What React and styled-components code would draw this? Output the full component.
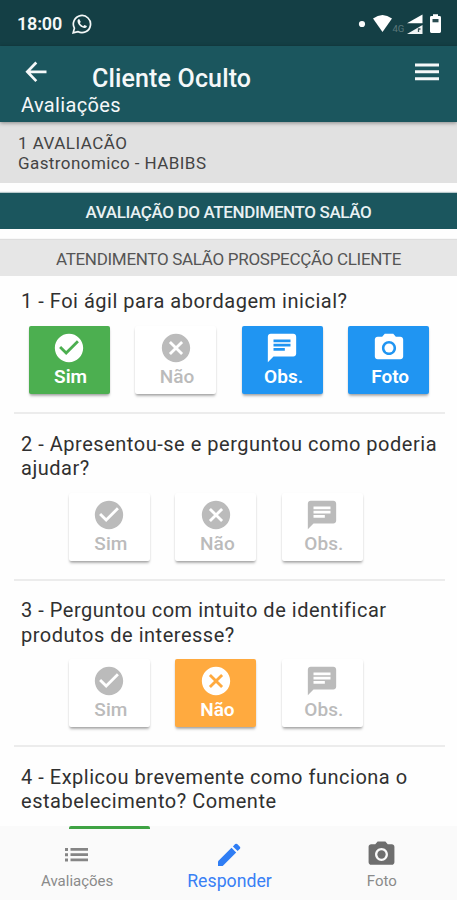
import React from "react";
import styled, { createGlobalStyle } from "styled-components";
import { MdCheckCircle, MdCancel, MdChat, MdCameraAlt } from "react-icons/md";

const GlobalStyle = createGlobalStyle`
  * { box-sizing: border-box; }
  body { margin: 0; background: #fff; font-family: Roboto, "Liberation Sans", sans-serif; }
`;

const Screen = styled.div`
  width: 457px;
  height: 900px;
  overflow: hidden;
  display: flex;
  flex-direction: column;
  background: #fefefe;
`;

const StatusBar = styled.div`
  height: 46px;
  flex: none;
  display: flex;
  align-items: center;
  justify-content: space-between;
  padding: 1px 14px 0 17px;
  background: #143f45;
  color: #f4f8f8;
`;

const StatusGroup = styled.div`
  display: flex;
  align-items: center;
`;

const Clock = styled.span`
  font-size: 18px;
  font-weight: 600;
  letter-spacing: -0.2px;
  margin-right: 10px;
`;

const Header = styled.header`
  height: 76px;
  flex: none;
  padding: 10px 18px 0 21px;
  background: #1b565e;
  color: #f5f8f9;
  position: relative;
  z-index: 1;
  box-shadow: 0 1px 4px rgba(0, 0, 0, 0.4);
`;

const TitleRow = styled.div`
  height: 36px;
  display: grid;
  grid-template-columns: 71px 1fr 24px;
  align-items: start;
`;

const Title = styled.h1`
  margin: 8px 0 0;
  font-size: 25px;
  line-height: 30px;
  font-weight: 500;
  letter-spacing: 0.15px;
  white-space: nowrap;
`;

const Subtitle = styled.div`
  font-size: 20px;
  line-height: 26px;
  letter-spacing: 0.35px;
`;

const Summary = styled.section`
  height: 61px;
  flex: none;
  padding: 11px 18px 0;
  background: #e1e1e1;
  color: #444;
  font-size: 17px;
  line-height: 20px;
`;

const SummaryLine = styled.div`
  letter-spacing: ${(p) => p.$track}px;
`;

const SectionBar = styled.div`
  height: 36px;
  flex: none;
  display: flex;
  align-items: center;
  justify-content: center;
  padding-top: 2px;
  white-space: nowrap;
  font-size: 17px;
  margin-top: ${(p) => (p.$primary ? 10 : 11)}px;
  font-weight: ${(p) => (p.$primary ? 500 : 400)};
  letter-spacing: ${(p) => (p.$primary ? -0.37 : -0.3)}px;
  background: ${(p) => (p.$primary ? "#1b565e" : "#e6e6e6")};
  color: ${(p) => (p.$primary ? "#e9f1f3" : "#555")};
  box-shadow: 0 -1px 1px ${(p) => (p.$primary ? "#b9c9cc" : "#ddd")};
`;

const Questions = styled.main`
  height: 553px;
  flex: none;
  padding: 0 12px 0 14px;
  overflow: hidden;
`;

const Question = styled.section`
  height: ${(p) => p.$height}px;
  padding-top: ${(p) => p.$top}px;
  border-bottom: 2px solid #ececec;
`;

const Prompt = styled.div`
  padding-left: 7px;
  font-size: 20px;
  line-height: 24.5px;
  letter-spacing: 0.52px;
  color: #303030;
  white-space: nowrap;
`;

const Actions = styled.div`
  display: flex;
  gap: 25.5px;
  margin-top: 12px;
  padding-left: ${(p) => (p.$full ? 14.6 : 54.9)}px;
`;

const palette = { yes: "#4caf50", no: "#ffaa3f", info: "#2095f2" };

const ActionButton = styled.button`
  width: 81px;
  height: 68px;
  flex: none;
  padding: 5px 0 0;
  border: 0;
  border-radius: 2px;
  display: flex;
  flex-direction: column;
  align-items: center;
  font-family: inherit;
  font-size: 19px;
  line-height: 23px;
  font-weight: ${(p) => (p.$tone ? 600 : 500)};
  letter-spacing: ${(p) => (p.$tone ? 0 : 0.1)}px;
  background: ${(p) => palette[p.$tone] || "#fff"};
  color: ${(p) => (p.$tone ? "#fff" : "#bbb")};
  box-shadow: 0 3px 3px -1px rgba(0, 0, 0, 0.28), 0 1px 2px rgba(0, 0, 0, 0.12);
  svg { display: block; flex: none; }
`;

const ActionLabel = styled.span`
  padding-left: 3px;
`;

const NavBar = styled.nav`
  height: 71px;
  flex: none;
  display: grid;
  grid-template-columns: repeat(3, 1fr);
  background: #fafafa;
`;

const NavItem = styled.div`
  display: flex;
  flex-direction: column;
  align-items: center;
  padding: 10px 0 0 2px;
  font-size: ${(p) => (p.$active ? 17.7 : 15)}px;
  line-height: 22px;
  color: ${(p) => (p.$active ? "#3880f5" : "#8a8a8a")};
`;

const NavIcon = styled.div`
  height: 31px;
  display: flex;
  align-items: center;
  justify-content: center;
  color: ${(p) => (p.$active ? "#2f7df4" : "#6e6e6e")};
`;

const NextQuestion = styled.section`
  padding-top: 17.5px;
`;

const NextActions = styled.div`
  height: 4px;
  margin: 12px -12px 0 -14px;
  padding-left: 69px;
  background: #fafafa;
`;

const NextAnswerEdge = styled.div`
  width: 81px;
  height: 4px;
  border-radius: 2px 2px 0 0;
  background: #3fa344;
`;

const WhatsApp = () => (
  <svg width="20" height="20" viewBox="0 0 20 20" fill="none">
    <path d="M1.2 18.8 2.4 14.2A8.6 8.6 0 1 1 5.8 17.6Z" stroke="currentColor" strokeWidth="1.7" />
    <path d="M7.2 5.1c-.5-.2-1.7.6-1.7 2 0 3.3 4.1 7.2 7.4 7 1.4-.1 2.2-1.3 1.9-2l-2.4-1.2-1.2 1.3c-1.4-.5-2.8-1.8-3.3-3.1l.9-1.2Z" fill="currentColor" />
  </svg>
);

const StatusIcons = () => (
  <svg width="86" height="26" viewBox="0 0 86 26">
    <circle cx="5" cy="13" r="3.1" fill="#f8fafa" />
    <path d="M16 7.5Q25.5.5 35 7.5L25.5 21Z" fill="#fff" />
    <text x="35.5" y="20.5" fontSize="9.5" letterSpacing="-.2" fontFamily="Roboto, sans-serif" fill="#5b777a">4G</text>
    <path d="M50 12.3 65.5 3.5V12.3Z" fill="#fff" />
    <path d="M50 23 65.5 14V23Z" fill="#f1f5f5" />
    <path d="M61.5 21v-3h2" stroke="#38565b" strokeWidth="1.3" fill="none" />
    <path d="M76 5V3.2h5V5h1.6q1.4 0 1.4 1.4v14.2q0 1.4-1.4 1.4h-8.2q-1.4 0-1.4-1.4V6.4Q73 5 74.4 5Z" fill="#fff" />
    <path d="M75.5 8h6v3.3h-6Z" fill="#294b50" />
  </svg>
);

const BackArrow = styled.svg`
  display: block;
  margin: 5px 0 0 4px;
`;

const MenuBars = styled.svg`
  display: block;
  margin-top: 7px;
`;

const ListGlyph = () => (
  <svg width="24" height="16" viewBox="0 0 24 16" fill="#858585">
    <path d="M0 1h3v3H0ZM5.5 1H23v2.7H5.5ZM0 6.3h3v3H0ZM5.5 6.3H23V9H5.5ZM0 11.6h3v3H0ZM5.5 11.6H23v2.7H5.5Z" />
  </svg>
);

const Pencil = () => (
  <svg width="24" height="24" viewBox="0 0 24 24" fill="currentColor">
    <path d="M1 18.3 14.5 4.8 19.2 9.5 5.7 23H1Z" />
    <path d="M15.9 3.4 18.2 1.1q1-.9 2 0l2.7 2.7q.9 1 0 2L20.6 8.1Z" />
  </svg>
);

const kinds = {
  yes: { label: "Sim", Icon: MdCheckCircle },
  no: { label: "Não", Icon: MdCancel },
  note: { label: "Obs.", Icon: MdChat },
  photo: { label: "Foto", Icon: MdCameraAlt },
};

const questions = [
  {
    height: 138, top: 13,
    lines: ["1 - Foi ágil para abordagem inicial?"],
    actions: [["yes", "yes"], ["no"], ["note", "info"], ["photo", "info"]],
  },
  {
    height: 166.5, top: 17.5,
    lines: ["2 - Apresentou-se e perguntou como poderia", "ajudar?"],
    actions: [["yes"], ["no"], ["note"]],
  },
  {
    height: 166.5, top: 17.5,
    lines: ["3 - Perguntou com intuito de identificar", "produtos de interesse?"],
    actions: [["yes"], ["no", "no"], ["note"]],
  },
];

export default function App() {
  return (
    <Screen>
      <GlobalStyle />
      <StatusBar>
        <StatusGroup>
          <Clock>18:00</Clock>
          <WhatsApp />
        </StatusGroup>
        <StatusIcons />
      </StatusBar>
      <Header>
        <TitleRow>
          <BackArrow width="22" height="22" viewBox="0 0 22 22" fill="none" stroke="currentColor" strokeWidth="2.7">
            <path d="M11.3 1.5 2.3 10.8 11.3 20.1M2.3 10.8H21.5" />
          </BackArrow>
          <Title>Cliente Oculto</Title>
          <MenuBars width="24" height="18" viewBox="0 0 24 18" fill="currentColor">
            <path d="M0 .5h24v3H0ZM0 7.3h24v3H0ZM0 14.2h24v3H0Z" />
          </MenuBars>
        </TitleRow>
        <Subtitle>Avaliações</Subtitle>
      </Header>
      <Summary>
        <SummaryLine $track={0.48}>1 AVALIACÃO</SummaryLine>
        <SummaryLine $track={0.42}>Gastronomico - HABIBS</SummaryLine>
      </Summary>
      <SectionBar $primary>AVALIAÇÃO DO ATENDIMENTO SALÃO</SectionBar>
      <SectionBar>ATENDIMENTO SALÃO PROSPECÇÃO CLIENTE</SectionBar>
      <Questions>
        {questions.map((q) => (
          <Question key={q.lines[0]} $height={q.height} $top={q.top}>
            <Prompt>
              {q.lines.map((text) => (
                <div key={text}>{text}</div>
              ))}
            </Prompt>
            <Actions $full={q.actions.length === 4}>
              {q.actions.map(([kind, tone]) => {
                const { label, Icon } = kinds[kind];
                return (
                  <ActionButton key={kind} $tone={tone}>
                    <Icon size={34} />
                    <ActionLabel>{label}</ActionLabel>
                  </ActionButton>
                );
              })}
            </Actions>
          </Question>
        ))}
        <NextQuestion>
          <Prompt>
            <div>4 - Explicou brevemente como funciona o</div>
            <div>estabelecimento? Comente</div>
          </Prompt>
          <NextActions>
            <NextAnswerEdge />
          </NextActions>
        </NextQuestion>
      </Questions>
      <NavBar>
        <NavItem>
          <NavIcon><ListGlyph /></NavIcon>
          Avaliações
        </NavItem>
        <NavItem $active>
          <NavIcon $active><Pencil /></NavIcon>
          Responder
        </NavItem>
        <NavItem>
          <NavIcon><MdCameraAlt size={31} /></NavIcon>
          Foto
        </NavItem>
      </NavBar>
    </Screen>
  );
}
